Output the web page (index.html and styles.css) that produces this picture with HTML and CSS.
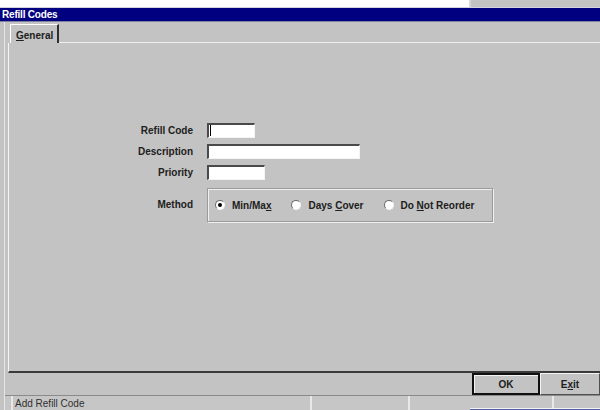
FILE: index.html
```html
<!DOCTYPE html>
<html>
<head>
<meta charset="utf-8">
<title>Refill Codes</title>
<link rel="stylesheet" href="styles.css">
</head>
<body>
<div class="screen">
  <div class="topstrip">
    <div class="blank"></div>
    <div class="grey"></div>
  </div>
  <div class="titlebar">Refill Codes</div>
  <div class="window">
    <div class="tabs">
      <div class="tab"><u>G</u>eneral</div>
      <div class="tab-fill"></div>
    </div>
    <div class="panel">
      <div class="form">
        <label class="lbl">Refill Code</label>
        <div class="field w-code"><span class="caret"></span></div>
        <label class="lbl">Description</label>
        <div class="field w-desc"></div>
        <label class="lbl">Priority</label>
        <div class="field w-prio"></div>
        <label class="lbl">Method</label>
        <div class="group">
          <div class="opt"><span class="radio on"></span><span class="txt">Min/Ma<u>x</u></span></div>
          <div class="opt"><span class="radio"></span><span class="txt">Days <u>C</u>over</span></div>
          <div class="opt"><span class="radio"></span><span class="txt">Do <u>N</u>ot Reorder</span></div>
        </div>
      </div>
    </div>
    <div class="footer">
      <div class="btn default">OK</div>
      <div class="btn">E<u>x</u>it</div>
    </div>
    <div class="status">
      <div class="cell first">Add Refill Code</div>
      <div class="cell c2"></div>
      <div class="cell c3"></div>
      <div class="cell c4"></div>
    </div>
  </div>
  <div class="peek"></div>
</div>
</body>
</html>
```
FILE: styles.css
```css
* { box-sizing: border-box; }

html, body {
  margin: 0;
  padding: 0;
}

body {
  width: 600px;
  height: 410px;
  overflow: hidden;
  background: #c3c3c3;
  font-family: "Liberation Sans", Arial, sans-serif;
  font-size: 10px;
  color: #1a1a1a;
}

.screen {
  position: relative;
  width: 600px;
  height: 410px;
  display: flex;
  flex-direction: column;
}

/* strip of desktop above the dialog */
.topstrip {
  display: flex;
  height: 8px;
  border-bottom: 1px solid #d4d4dc;
}
.topstrip .blank {
  width: 469px;
  background: #ffffff;
}
.topstrip .grey {
  flex: 1;
  background: #c3c3c3;
  border-left: 2px solid #d8d8d8;
}

.titlebar {
  height: 14px;
  background: #000080;
  color: #ffffff;
  font-weight: bold;
  line-height: 14px;
  padding-left: 2px;
  border-bottom: 1px solid #8080a0;
  letter-spacing: -0.2px;
}

.window {
  flex: 1;
  display: flex;
  flex-direction: column;
  margin-left: 4px;
  border-left: 1px solid #e6e6e6;
}

/* tab strip */
.tabs {
  display: flex;
  height: 21px;
  padding-left: 5px;
}
.tab {
  margin-top: 2px;
  width: 49px;
  padding: 5px 0 0 5px;
  font-weight: bold;
  color: #202020;
  border-top: 1px solid #ffffff;
  border-left: 1px solid #ffffff;
  border-right: 2px solid #303030;
}
.tab-fill {
  flex: 1;
  border-bottom: 1px solid #f0f0f0;
}

.panel {
  height: 330px;
  margin-left: 3px;
  border-left: 1px solid #f4f4f4;
  border-bottom: 2px solid #3a3a3a;
  padding-top: 80px;
}

.form {
  display: grid;
  grid-template-columns: 184px auto;
  column-gap: 14px;
  row-gap: 6px;
  align-items: center;
  justify-items: start;
}

.lbl {
  justify-self: end;
  font-weight: bold;
  color: #202020;
}

.field {
  position: relative;
  height: 15px;
  background: #ffffff;
  border-top: 2px solid #4a4a4a;
  border-left: 2px solid #4a4a4a;
  border-right: 1px solid #f4f4f4;
  border-bottom: 1px solid #f4f4f4;
}
.w-code { width: 48px; }
.w-desc { width: 153px; }
.w-prio { width: 58px; }

.caret {
  position: absolute;
  left: 1px;
  top: 0;
  width: 1px;
  height: 11px;
  background: #000000;
}

.group {
  margin-top: 2px;
  width: 286px;
  height: 34px;
  border: 1px solid #9a9a9a;
  box-shadow: inset 1px 1px 0 #f0f0f0, 1px 1px 0 #f0f0f0;
  display: flex;
  align-items: center;
  gap: 20px;
  padding-left: 7px;
  font-weight: bold;
  color: #202020;
  white-space: nowrap;
}

.opt {
  display: flex;
  align-items: center;
  gap: 7px;
}

.radio {
  position: relative;
  flex: none;
  width: 10px;
  height: 10px;
  border-radius: 50%;
  background: #ffffff;
  border: 1px solid;
  border-color: #6a6a6a #f4f4f4 #f4f4f4 #6a6a6a;
}
.radio.on::after {
  content: "";
  position: absolute;
  left: 2px;
  top: 2px;
  width: 4px;
  height: 4px;
  border-radius: 50%;
  background: #000000;
}

.footer {
  height: 22px;
  display: flex;
  justify-content: flex-end;
}

.btn {
  width: 60px;
  height: 22px;
  display: flex;
  align-items: center;
  justify-content: center;
  font-weight: bold;
  color: #202020;
  border: 1px solid;
  border-color: #f4f4f4 #505050 #505050 #f4f4f4;
}
.btn.default {
  width: 68px;
  border: 2px solid #101010;
  box-shadow: inset 1px 1px 0 #f4f4f4;
}

.status {
  flex: 1;
  display: flex;
  border-top: 1px solid #8a8a8a;
  background: #c6c6c6;
  color: #303030;
}
.cell {
  height: 100%;
  padding: 2px 0 0 2px;
  border-left: 2px solid #e8e8e8;
}
.cell.first {
  margin-left: 6px;
  width: 299px;
}
.cell.c2 { width: 98px; }
.cell.c3 { width: 144px; }
.cell.c4 { flex: 1; }

/* edge of another window poking in at the bottom */
.peek {
  position: absolute;
  left: 470px;
  top: 408px;
  width: 130px;
  height: 2px;
  background: #f4f4f4;
  border-bottom: 1px solid #5060a0;
}
```
